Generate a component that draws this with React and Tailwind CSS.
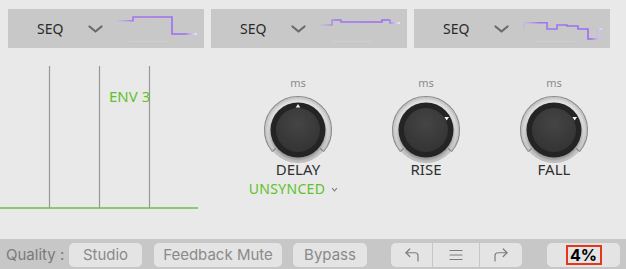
import React from "react";

const SANS = { fontFamily: '"Noto Sans", "Open Sans", sans-serif' };
const UI = { fontFamily: 'Inter, "Noto Sans", sans-serif' };

function SeqPanel({ points, id }) {
  const d = points.map((p, i) => (i === 0 ? "M" : "L") + p[0] + " " + p[1]).join(" ");
  return (
    <div className="w-[196px] h-[39px] bg-[#c8c8c8] flex items-center pl-[29px]">
      <span className="w-[51px] text-[14px] text-[#2a2a2a] leading-none" style={SANS}>
        SEQ
      </span>
      <svg width="15" height="8" viewBox="0 0 15 8" className="shrink-0">
        <path d="M1.5 1.5 L7.5 6.5 L13.5 1.5" fill="none" stroke="#6a6a6a" strokeWidth="2.2" strokeLinecap="round" strokeLinejoin="round" />
      </svg>
      <svg width="80" height="39" viewBox="0 0 80 39" className="ml-[14px] shrink-0">
        <defs>
          <linearGradient id={id} x1="0" y1="0" x2="80" y2="0" gradientUnits="userSpaceOnUse">
            <stop offset="0" stopColor="#b89cf4" stopOpacity="0.2" />
            <stop offset="0.2" stopColor="#9c6cf2" stopOpacity="0.9" />
            <stop offset="0.85" stopColor="#9c6cf2" />
            <stop offset="1" stopColor="#f4efff" />
          </linearGradient>
        </defs>
        <line x1="12" y1="32.5" x2="52" y2="32.5" stroke="#d6d6d6" strokeWidth="1" opacity="0.5" />
        <path d={d} fill="none" stroke={`url(#${id})`} strokeWidth="1.6" />
      </svg>
    </div>
  );
}

function Knob({ id, pos }) {
  const c = 38;
  return (
    <svg width="76" height="76" viewBox="0 0 76 76">
      <defs>
        <radialGradient id={id + "h"} cx="0.5" cy="0.5" r="0.5">
          <stop offset="0.78" stopColor="#f3f3f3" />
          <stop offset="0.92" stopColor="#d6d6d6" />
          <stop offset="1" stopColor="#bdbdbd" />
        </radialGradient>
        <radialGradient id={id + "f"} cx="0.5" cy="0.35" r="0.6">
          <stop offset="0" stopColor="#454545" />
          <stop offset="1" stopColor="#353535" />
        </radialGradient>
        <filter id={id + "s"} x="-30%" y="-30%" width="160%" height="160%">
          <feGaussianBlur stdDeviation="1.8" />
        </filter>
      </defs>
      <circle cx={c} cy={c} r="33" fill={`url(#${id}h)`} />
      <path d="M12.3 59.5 A33.5 33.5 0 1 1 63.7 59.5" fill="none" stroke="#8a8a8a" strokeWidth="1.1" />
      <line x1="12.3" y1="59.5" x2="15.6" y2="56.6" stroke="#8a8a8a" strokeWidth="1.1" />
      <line x1="63.7" y1="59.5" x2="60.4" y2="56.6" stroke="#8a8a8a" strokeWidth="1.1" />
      <circle cx={c} cy={c + 2.5} r="28" fill="#000" opacity="0.35" filter={`url(#${id}s)`} />
      <circle cx={c} cy={c} r="27.5" fill="#242424" />
      <circle cx={c} cy={c} r="22" fill={`url(#${id}f)`} />
      {pos === "top" ? (
        <path d="M38 12 L40.3 15.6 L35.7 15.6 Z" fill="#f2f2f2" />
      ) : (
        <path d="M56.4 25 L61 25 L58.7 28.6 Z" fill="#f2f2f2" />
      )}
    </svg>
  );
}

function KnobCol({ id, label, pos, children }) {
  return (
    <div className="w-[128px] flex flex-col items-center pt-[28px]">
      <span className="text-[11px] leading-[13px] text-[#8a8a8a]" style={SANS}>
        ms
      </span>
      <div className="mt-[3px]">
        <Knob id={id} pos={pos} />
      </div>
      <span className="mt-[-7px] text-[15px] leading-[16px] text-[#303030]" style={SANS}>
        {label}
      </span>
      {children}
    </div>
  );
}

function Btn({ w, children }) {
  return (
    <div className={`${w} h-[24px] rounded-[5px] bg-[#e4e4e4] flex items-center justify-center text-[15px] text-[#8a8a8a]`} style={UI}>
      {children}
    </div>
  );
}

export default function App() {
  return (
    <div className="w-[626px] h-[269px] bg-[#e9e9e9] flex flex-col overflow-hidden">
      <div className="h-[48px] flex pl-[8px] pt-[9px] gap-[7px]">
        <SeqPanel id="g1" points={[[0, 11.7], [16, 11.7], [16, 8], [55, 8], [55, 25], [80, 25]]} />
        <SeqPanel id="g2" points={[[0, 16], [12, 16], [12, 11], [21, 11], [21, 13], [62, 13], [62, 11], [70, 11], [70, 14], [80, 14]]} />
        <SeqPanel id="g3" points={[[1, 21], [1, 13.7], [24, 13.7], [24, 20], [34, 20], [34, 16], [44, 16], [44, 17], [55, 17], [55, 20], [65, 20], [65, 30], [75, 30], [75, 20], [79, 20]]} />
      </div>

      <div className="h-[191px] flex">
        <div className="w-[234px] relative">
          <svg width="234" height="191" viewBox="0 0 234 191">
            <line x1="49.5" y1="18" x2="49.5" y2="160" stroke="#979797" strokeWidth="1.2" />
            <line x1="99.5" y1="18" x2="99.5" y2="160" stroke="#979797" strokeWidth="1.2" />
            <line x1="149.5" y1="18" x2="149.5" y2="160" stroke="#979797" strokeWidth="1.2" />
            <line x1="0" y1="160" x2="198" y2="160" stroke="#6cc13c" strokeWidth="1.6" />
          </svg>
          <span className="absolute left-[109px] top-[40px] text-[15px] leading-[16px] text-[#5fc22a]" style={SANS}>
            ENV 3
          </span>
        </div>
        <KnobCol id="k1" label="DELAY" pos="top">
          <div className="flex items-center gap-[6px] mt-[4px] -ml-[9px]">
            <span className="text-[14px] leading-[16px] text-[#5fc22a] tracking-[0.3px]" style={SANS}>
              UNSYNCED
            </span>
            <svg width="7" height="5" viewBox="0 0 7 5">
              <path d="M1 1 L3.5 3.8 L6 1" fill="none" stroke="#7a7a7a" strokeWidth="1.1" />
            </svg>
          </div>
        </KnobCol>
        <KnobCol id="k2" label="RISE" pos="side" />
        <KnobCol id="k3" label="FALL" pos="side" />
      </div>

      <div className="h-[30px] bg-[#c7c7c7] flex items-start pt-[4px]">
        <span className="w-[69px] pl-[6px] h-[24px] flex items-center text-[15px] text-[#7a7a7a]" style={UI}>
          Quality :
        </span>
        <Btn w="w-[73px]">Studio</Btn>
        <div className="ml-[12px]">
          <Btn w="w-[128px]">Feedback Mute</Btn>
        </div>
        <div className="ml-[11px]">
          <Btn w="w-[74px]">Bypass</Btn>
        </div>
        <div className="ml-[24px] flex gap-[1px]">
          <div className="w-[41px] h-[24px] bg-[#e4e4e4] rounded-l-[5px] flex items-center justify-center">
            <svg width="18" height="18" viewBox="0 0 24 24" fill="none" stroke="#7c7c7c" strokeWidth="1.6" strokeLinecap="round" strokeLinejoin="round">
              <polyline points="9 14 4 9 9 4" />
              <path d="M20 20v-7a4 4 0 0 0-4-4H4" />
            </svg>
          </div>
          <div className="w-[46px] h-[24px] bg-[#e4e4e4] flex items-center justify-center">
            <svg width="18" height="18" viewBox="0 0 24 24" fill="none" stroke="#7c7c7c" strokeWidth="1.6" strokeLinecap="round">
              <line x1="4" y1="6" x2="20" y2="6" />
              <line x1="4" y1="12" x2="20" y2="12" />
              <line x1="4" y1="18" x2="20" y2="18" />
            </svg>
          </div>
          <div className="w-[42px] h-[24px] bg-[#e4e4e4] rounded-r-[5px] flex items-center justify-center">
            <svg width="18" height="18" viewBox="0 0 24 24" fill="none" stroke="#7c7c7c" strokeWidth="1.6" strokeLinecap="round" strokeLinejoin="round">
              <polyline points="15 14 20 9 15 4" />
              <path d="M4 20v-7a4 4 0 0 1 4-4h12" />
            </svg>
          </div>
        </div>
        <div className="ml-[25px] w-[73px] h-[24px] bg-[#e4e4e4] rounded-[5px] flex items-center justify-center">
          <div className="w-[36px] h-[20px] border-2 border-[#e8361c] flex items-center justify-center text-[16px] font-bold text-black" style={UI}>
            4%
          </div>
        </div>
      </div>
    </div>
  );
}
